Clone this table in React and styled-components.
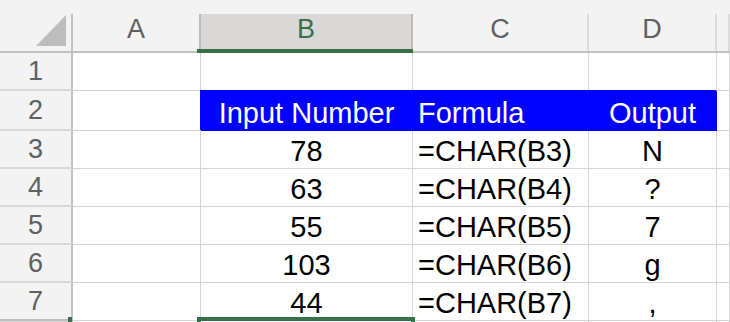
import React from 'react';
import styled, { createGlobalStyle } from 'styled-components';

const GREEN = '#39704a';
const GRID = '#d4d4d4';
const HEAD_BG = '#f3f3f3';
const HEAD_LINE = '#c2c2c2';
const COLS = '73px 128px 212px 176px 128px 1fr';

const columns = ['A', 'B', 'C', 'D', ''];

// row 8 only peeks in at the bottom edge, so its number is left out
const rows = [
  { n: 1, h: 38, cells: ['', '', '', ''] },
  { n: 2, h: 40, head: true, cells: ['', 'Input Number', 'Formula', 'Output'] },
  { n: 3, h: 38, cells: ['', '78', '=CHAR(B3)', 'N'] },
  { n: 4, h: 38, cells: ['', '63', '=CHAR(B4)', '?'] },
  { n: 5, h: 38, cells: ['', '55', '=CHAR(B5)', '7'] },
  { n: 6, h: 38, cells: ['', '103', '=CHAR(B6)', 'g'] },
  { n: 7, h: 38, cells: ['', '44', '=CHAR(B7)', ','] },
  { n: 8, h: 38, selected: true, cells: ['', '', '', ''] },
];

const aligns = ['left', 'center', 'left', 'center'];

const GlobalStyle = createGlobalStyle`
  html, body {
    margin: 0;
    padding: 0;
    background: #fff;
    overflow: hidden;
  }
  * {
    box-sizing: border-box;
  }
`;

const App = () => (
  <>
    <GlobalStyle />
    <Styled.Sheet>
      <Styled.HeaderRow>
        <Styled.Corner>
          <svg width="31" height="31" viewBox="0 0 31 31">
            <polygon points="30,0 30,31 0,31" fill="#bdbdbd" />
          </svg>
        </Styled.Corner>
        {columns.map((c) => (
          <Styled.ColHead key={c || 'E'} $selected={c === 'B'}>
            {c}
          </Styled.ColHead>
        ))}
      </Styled.HeaderRow>

      {rows.map((row) => (
        <Styled.Row key={row.n} $h={row.h}>
          <Styled.RowHead $selected={row.selected}>{row.selected ? '' : row.n}</Styled.RowHead>
          {row.cells.map((text, i) => (
            <Styled.Cell
              key={i}
              $align={aligns[i]}
              $fill={row.head && i > 0}
              $active={row.selected && i === 1}
            >
              {text}
            </Styled.Cell>
          ))}
          <Styled.Cell $align="left" />
        </Styled.Row>
      ))}
    </Styled.Sheet>
  </>
);

const Styled = {
  Sheet: styled.div`
    width: 730px;
    height: 322px;
    overflow: hidden;
    font-family: 'Liberation Sans', Arial, sans-serif;
  `,
  HeaderRow: styled.div`
    display: grid;
    grid-template-columns: ${COLS};
    padding-top: 14px;
    background: ${HEAD_BG};
    border-bottom: 2px solid ${HEAD_LINE};
  `,
  Corner: styled.div`
    height: 37px;
    display: flex;
    align-items: flex-end;
    justify-content: flex-end;
    padding: 0 4px 5px 0;
    border-right: 2px solid ${HEAD_LINE};
  `,
  ColHead: styled.div`
    position: relative;
    height: 37px;
    display: flex;
    align-items: center;
    justify-content: center;
    padding-bottom: 6px;
    font-size: 27px;
    color: ${({ $selected }) => ($selected ? GREEN : '#606060')};
    background: ${({ $selected }) => ($selected ? '#d9d8d6' : HEAD_BG)};
    border-right: 2px solid ${({ $selected }) => ($selected ? '#bdbdbd' : '#dcdcdc')};
    box-shadow: ${({ $selected }) => ($selected ? '-2px 0 0 #bdbdbd' : 'none')};

    ${({ $selected }) =>
      $selected &&
      `
      &::after {
        content: '';
        position: absolute;
        left: -4px;
        right: -2px;
        bottom: -2px;
        height: 4px;
        background: ${GREEN};
        z-index: 1;
      }
    `}
  `,
  Row: styled.div`
    display: grid;
    grid-template-columns: ${COLS};
    height: ${({ $h }) => $h}px;
  `,
  RowHead: styled.div`
    position: relative;
    display: flex;
    align-items: center;
    justify-content: center;
    font-size: 27px;
    color: #606060;
    background: ${({ $selected }) => ($selected ? '#d9d8d6' : HEAD_BG)};
    border-right: 2px solid ${HEAD_LINE};
    border-bottom: 2px solid #d8d8d8;
    box-shadow: ${({ $selected }) => ($selected ? '0 -2px 0 #bdbdbd' : 'none')};

    ${({ $selected }) =>
      $selected &&
      `
      &::after {
        content: '';
        position: absolute;
        top: -4px;
        bottom: 0;
        right: -1px;
        width: 4px;
        background: ${GREEN};
      }
    `}
  `,
  Cell: styled.div`
    position: relative;
    display: flex;
    align-items: flex-end;
    justify-content: ${({ $align }) => ($align === 'center' ? 'center' : 'flex-start')};
    padding: 0 5px;
    font-size: 29px;
    white-space: nowrap;
    color: ${({ $fill }) => ($fill ? '#fff' : '#000')};
    background: ${({ $fill }) => ($fill ? '#0000ff' : '#fff')};
    border-right: 1px solid ${({ $fill }) => ($fill ? '#0000ff' : GRID)};
    border-bottom: 1px solid ${({ $fill }) => ($fill ? '#0000ff' : GRID)};
    box-shadow: ${({ $fill }) => ($fill ? '-1px -1px 0 0 #0000ff' : 'none')};

    ${({ $active }) =>
      $active &&
      `
      &::after {
        content: '';
        position: absolute;
        top: -4px;
        left: -4px;
        right: -3px;
        bottom: -4px;
        border: 4px solid ${GREEN};
        z-index: 2;
      }
    `}
  `,
};

export default App;
